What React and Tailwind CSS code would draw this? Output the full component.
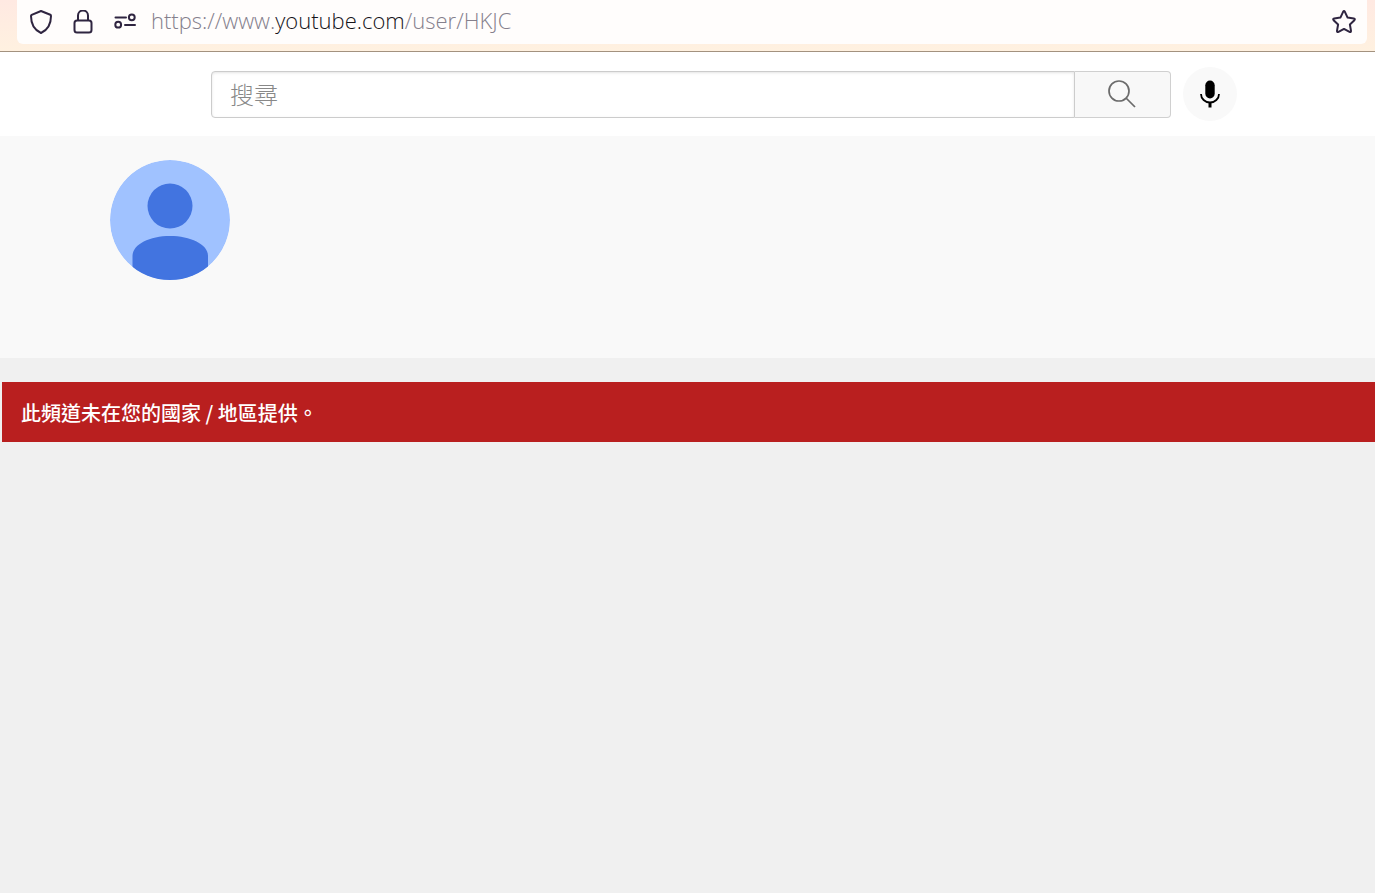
function AddressBar() {
  return (
    <div className="border-b border-[#a3927f] bg-gradient-to-b from-[#ffe9e2] to-[#fff1e0] pr-2 pb-[7px] pl-[17px]">
      <div className="flex h-11 items-center rounded-b-md bg-[#fffdfc] pr-[10px] pl-3 text-[#2f2540]">
        <button type="button" aria-label="Tracking protection" className="mr-[18px]">
          <svg className="h-6 w-6" viewBox="0 0 24 24" fill="none" stroke="currentColor" strokeWidth="2" strokeLinejoin="round">
            <path d="M12 1 L21.3 4.8 Q22 5.1 22 6 C22 14.6 18.2 20.2 12 23 C5.8 20.2 2 14.6 2 6 Q2 5.1 2.7 4.8 Z" />
          </svg>
        </button>
        <button type="button" aria-label="Site security" className="mr-[18px]">
          <svg className="h-6 w-6" viewBox="0 0 24 24" fill="none" stroke="currentColor" strokeWidth="2">
            <rect x="3.5" y="10.5" width="17" height="12" rx="2.5" />
            <path d="M7 10.5 V5.5 a5 5 0 0 1 10 0 V10.5" />
          </svg>
        </button>
        <button type="button" aria-label="Permissions" className="mr-[14px]">
          <svg className="h-6 w-6" viewBox="0 0 24 24" fill="none" stroke="currentColor" strokeWidth="2" strokeLinecap="round">
            <path d="M2.5 7.5 H13" />
            <circle cx="18.8" cy="7.3" r="2.9" />
            <path d="M12 15 H22" />
            <circle cx="5.2" cy="14.7" r="2.9" />
          </svg>
        </button>
        <a
          href="https://www.youtube.com/user/HKJC"
          className="flex-1 pb-1 font-['Open_Sans',sans-serif] text-[22px] leading-8 font-[340] text-[#85808c]"
        >
          https://www.<span className="text-[#15141a]">youtube.com</span>/user/HKJC
        </a>
        <button type="button" aria-label="Bookmark this page">
          <svg className="h-[26px] w-[26px]" viewBox="0 0 26 26" fill="none" stroke="currentColor" strokeWidth="2" strokeLinejoin="round">
            <path d="M12.1 2.8 Q13 1.4 13.9 2.8 L16.6 8.6 L22.8 9.4 Q24.5 9.8 23.4 11.2 L18.9 15.5 L20 21.8 Q20.1 23.6 18.5 22.9 L13 19.9 L7.5 22.9 Q5.9 23.6 6 21.8 L7.1 15.5 L2.6 11.2 Q1.5 9.8 3.2 9.4 L9.4 8.6 Z" />
          </svg>
        </button>
      </div>
    </div>
  );
}

function Masthead() {
  return (
    <header className="flex h-[84px] items-center bg-white pr-[138px] pl-[211px]">
      <form className="flex h-[47px] flex-1" onSubmit={(e) => e.preventDefault()}>
        <input
          type="search"
          aria-label="搜尋"
          placeholder="搜尋"
          className="min-w-0 flex-1 rounded-l-sm border border-[#ccc] bg-white px-[18px] font-['Noto_Sans_CJK_TC',sans-serif] text-2xl font-light text-[#333] shadow-[inset_0_1px_3px_#e4e4e4] outline-none placeholder:text-[#888]"
        />
        <button
          type="submit"
          aria-label="Search"
          className="flex w-24 items-center justify-center rounded-r-sm border border-l-0 border-[#d0d0d0] bg-[#f8f8f8]"
        >
          <svg className="h-8 w-8" viewBox="0 0 32 32" fill="none" stroke="#6b6b6b" strokeWidth="1.7">
            <circle cx="12" cy="13" r="10" />
            <path d="M19 20 L28 29" />
          </svg>
        </button>
      </form>
      <button
        type="button"
        aria-label="Search with your voice"
        className="ml-3 flex h-[54px] w-[54px] items-center justify-center rounded-full bg-[#f9f9f9]"
      >
        <svg className="h-8 w-8" viewBox="0 0 32 32">
          <rect x="11.3" y="2.5" width="9.4" height="18" rx="4.7" fill="#000" />
          <path d="M7 16 a9 8.5 0 0 0 18 0" fill="none" stroke="#000" strokeWidth="1.8" />
          <path d="M16 24.5 V29.5" stroke="#000" strokeWidth="3" />
        </svg>
      </button>
    </header>
  );
}

function Avatar() {
  return (
    <svg className="h-[120px] w-[120px] rounded-full" viewBox="0 0 120 120" role="img" aria-label="Channel avatar">
      <circle cx="60" cy="60" r="60" fill="#a0c2ff" />
      <circle cx="60" cy="46" r="22.5" fill="#4274e0" />
      <path d="M22.5 120 V96 C22.5 84 40 76 60 76 S98 84 98 96 V120 Z" fill="#4274e0" />
    </svg>
  );
}

export default function App() {
  return (
    <div className="flex min-h-screen flex-col bg-[#f0f0f0]">
      <AddressBar />
      <Masthead />
      <main>
        <section className="h-[222px] bg-[#f9f9f9] pt-6 pl-[110px]">
          <Avatar />
        </section>
        <div
          role="alert"
          className="mt-6 ml-[2px] flex h-[60px] items-center bg-[#b91f1f] px-[19px] pt-[2px] font-['Noto_Sans_CJK_TC',sans-serif] text-xl font-medium text-white"
        >
          此頻道未在您的國家 / 地區提供。
        </div>
      </main>
    </div>
  );
}
